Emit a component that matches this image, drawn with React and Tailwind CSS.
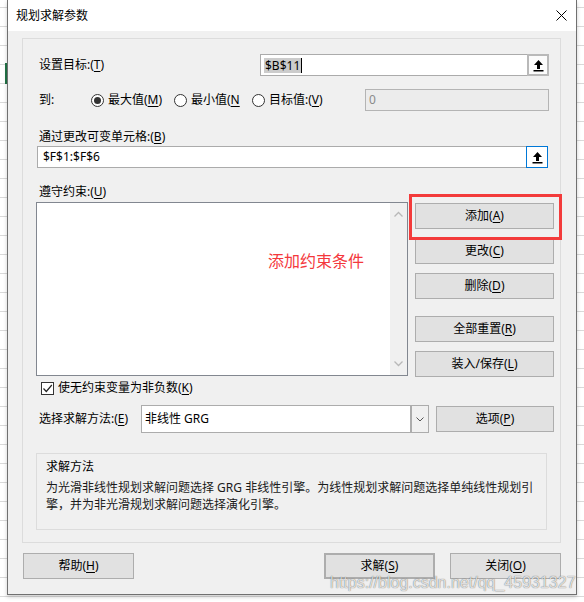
import React from "react";

const font = "font-['Noto_Sans','Noto_Sans_CJK_SC',sans-serif]";

const Key = ({ children }) => (
  <span className="underline underline-offset-[2px] decoration-[1px]">{children}</span>
);

const Btn = ({ children, className = "" }) => (
  <div
    className={`h-[26px] flex items-center justify-center bg-[#e1e1e1] border border-[#adadad] text-[12px] leading-[16px] text-black ${className}`}
  >
    {children}
  </div>
);

const UpArrow = () => (
  <svg width="11" height="13" viewBox="0 0 11 13">
    <path d="M5.5 1 L10 6 H7 V10 H4 V6 H1 Z" fill="#000" />
    <rect x="0.5" y="11" width="10" height="1.5" fill="#000" />
  </svg>
);

const Radio = ({ checked, children, className = "" }) => (
  <div className={`flex items-center gap-[4px] ${className}`}>
    <div className="w-[13px] h-[13px] rounded-full border border-[#333] bg-white flex items-center justify-center">
      {checked && <div className="w-[7px] h-[7px] rounded-full bg-[#333]" />}
    </div>
    <span>{children}</span>
  </div>
);

const Chevron = ({ down }) => (
  <svg width="9" height="6" viewBox="0 0 9 6">
    <path
      d={down ? "M0.5 0.5 L4.5 4.5 L8.5 0.5" : "M0.5 5.5 L4.5 1.5 L8.5 5.5"}
      stroke="#b8b8b8"
      strokeWidth="1.3"
      fill="none"
    />
  </svg>
);

export default function App() {
  return (
    <div
      className={`w-[584px] h-[602px] overflow-hidden relative flex bg-white bg-[repeating-linear-gradient(to_bottom,transparent_0_7px,#d9d9d9_7px_8px,transparent_8px_19px)] ${font}`}
    >
      {/* spreadsheet strip on the left */}
      <div className="w-[7px] shrink-0">
        <div className="mt-[63px] ml-[5px] w-[2px] h-[21px] bg-[#217346]" />
      </div>

      {/* dialog */}
      <div className="w-[570px] h-[595px] shrink-0 border-x border-b border-[#707070] bg-[#f0f0f0] shadow-[0_2px_4px_rgba(0,0,0,0.2)] flex flex-col">
        <div className="h-[31px] bg-white flex items-center justify-between pl-[8px] pr-[9px]">
          <span className="text-[12px] leading-[16px] text-black">规划求解参数</span>
          <svg width="11" height="11" viewBox="0 0 11 11">
            <path d="M0.5 0.5 L10.5 10.5 M10.5 0.5 L0.5 10.5" stroke="#000" strokeWidth="1" />
          </svg>
        </div>

        <div className="flex-1 pt-[7px] pl-[14px] text-[12px] leading-[16px] text-black">
          <div className="w-[539px] h-[505px] border border-[#dcdcdc] flex flex-col">
            {/* target */}
            <div className="mt-[15px] h-[22px] flex items-center pl-[16px]">
              <span className="w-[221px]">
                设置目标:(<Key>T</Key>)
              </span>
              <div className="w-[289px] h-[22px] border border-[#ababab] bg-white flex items-center">
                <div className="flex-1 flex items-center pl-[3px]">
                  <span className="bg-[#cccccc] px-[1px] leading-[15px]">$B$11</span>
                  <span className="w-[1px] h-[15px] bg-black" />
                </div>
                <div className="w-[22px] h-[22px] -mr-[1px] border-2 border-[#b9b9b9] bg-[#fbfbfb] flex items-center justify-center">
                  <UpArrow />
                </div>
              </div>
            </div>

            {/* to */}
            <div className="mt-[13px] h-[22px] flex items-center pl-[16px]">
              <span className="w-[52px]">到:</span>
              <Radio checked className="w-[83px]">
                最大值(<Key>M</Key>)
              </Radio>
              <Radio className="w-[78px]">
                最小值(<Key>N</Key>
              </Radio>
              <Radio className="w-[113px]">
                目标值:(<Key>V</Key>)
              </Radio>
              <div className="w-[184px] h-[22px] border border-[#b4b4b4] bg-[#ececec] flex items-center pl-[3px] text-[#8a8a8a]">
                0
              </div>
            </div>

            {/* changing cells */}
            <div className="mt-[18px] h-[16px] pl-[16px]">
              通过更改可变单元格:(<Key>B</Key>)
            </div>
            <div className="mt-[1px] ml-[14px] w-[511px] h-[22px] border border-[#ababab] bg-white flex items-center">
              <span className="flex-1 pl-[5px]">$F$1:$F$6</span>
              <div className="w-[22px] h-[22px] -mr-[1px] border border-[#0078d7] bg-white flex items-center justify-center">
                <UpArrow />
              </div>
            </div>

            {/* constraints */}
            <div className="mt-[16px] h-[16px] pl-[16px]">
              遵守约束:(<Key>U</Key>)
            </div>
            <div className="mt-[2px] flex">
              <div className="ml-[13px] w-[372px] h-[174px] border border-[#828790] bg-white flex">
                <div className="flex-1 pt-[48px] pl-[231px] text-[16px] leading-[20px] text-[#f4383c]">
                  添加约束条件
                </div>
                <div className="w-[17px] bg-[#f0f0f0] flex flex-col items-center justify-between py-[8px]">
                  <Chevron />
                  <Chevron down />
                </div>
              </div>
              <div className="ml-[7px] w-[139px] pt-[1px] flex flex-col relative">
                <Btn>
                  添加(<Key>A</Key>)
                </Btn>
                <Btn className="mt-[9px]">
                  更改(<Key>C</Key>)
                </Btn>
                <Btn className="mt-[9px]">
                  删除(<Key>D</Key>)
                </Btn>
                <Btn className="mt-[17px]">
                  全部重置(<Key>R</Key>)
                </Btn>
                <Btn className="mt-[9px]">
                  装入/保存(<Key>L</Key>)
                </Btn>
                <div className="absolute left-[-6px] top-[-8px] w-[153px] h-[46px] border-[3px] border-[#f33b3b]" />
              </div>
            </div>

            {/* checkbox */}
            <div className="mt-[3px] h-[16px] flex items-center pl-[18px] gap-[4px]">
              <div className="w-[13px] h-[13px] border border-[#333] bg-white flex items-center justify-center">
                <svg width="11" height="11" viewBox="0 0 11 11">
                  <path d="M1.5 5.5 L4.3 8.5 L9.8 2" stroke="#222" strokeWidth="1.2" fill="none" />
                </svg>
              </div>
              <span>
                使无约束变量为非负数(<Key>K</Key>)
              </span>
            </div>

            {/* method select */}
            <div className="mt-[9px] h-[28px] flex items-center pl-[16px]">
              <span className="w-[102px]">
                选择求解方法:(<Key>E</Key>)
              </span>
              <div className="w-[288px] h-[28px] border border-[#acacac] bg-white flex items-center">
                <span className="flex-1 pl-[3px]">非线性 GRG</span>
                <div className="w-[18px] h-[26px] border-l-2 border-[#acacac] bg-[#f0f0f0] flex items-center justify-center">
                  <svg width="8" height="5" viewBox="0 0 8 5">
                    <path d="M0.5 0.5 L4 4 L7.5 0.5" stroke="#555" strokeWidth="1" fill="none" />
                  </svg>
                </div>
              </div>
              <Btn className="ml-[7px] w-[118px]">
                选项(<Key>P</Key>)
              </Btn>
            </div>

            {/* method description */}
            <div className="mt-[20px] ml-[13px] w-[511px] h-[77px] border border-[#dcdcdc] pl-[9px] pt-[4px] leading-[17px] whitespace-nowrap">
              <div>求解方法</div>
              <div className="mt-[4px] text-[#1a1a1a]">
                为光滑非线性规划求解问题选择 GRG 非线性引擎。为线性规划求解问题选择单纯线性规划引
                <br />
                擎，并为非光滑规划求解问题选择演化引擎。
              </div>
            </div>
          </div>

          {/* bottom buttons */}
          <div className="mt-[10px] flex pl-[1px]">
            <Btn className="w-[111px]">
              帮助(<Key>H</Key>)
            </Btn>
            <Btn className="ml-[190px] w-[111px] border-2 border-[#0078d7]">
              求解(<Key>S</Key>)
            </Btn>
            <Btn className="ml-[15px] w-[111px]">
              关闭(<Key>O</Key>)
            </Btn>
          </div>
        </div>
      </div>

      {/* spreadsheet strip on the right */}
      <div className="flex-1" />

      {/* watermark */}
      <div className="absolute left-[330px] top-[573px] text-[16px] leading-[20px] font-['Liberation_Sans',sans-serif] text-[rgba(255,255,255,0.8)] [text-shadow:0_0_1px_rgba(0,0,0,0.7)]">
        https://blog.csdn.net/qq_45931327
      </div>
    </div>
  );
}
